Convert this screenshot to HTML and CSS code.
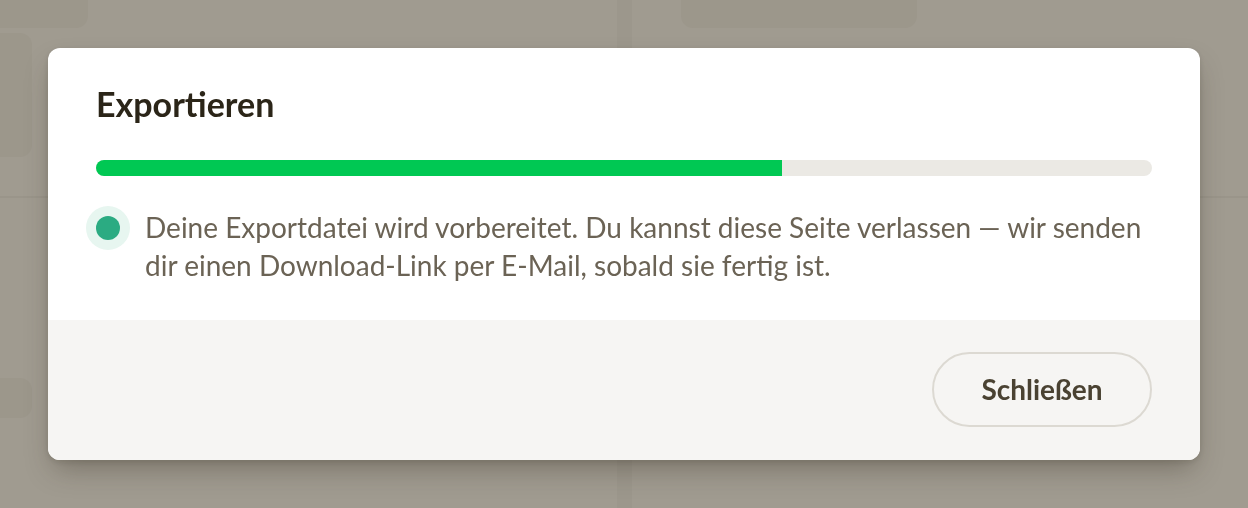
FILE: index.html
```html
<!DOCTYPE html>
<html lang="de">
<head>
    <meta charset="UTF-8">
    <meta name="viewport" content="width=device-width, initial-scale=1.0">
    <title>Exportieren</title>
    <link rel="stylesheet" href="styles.css">
</head>
<body>
    <!-- dimmed page behind the dialog -->
    <div class="page">
        <div class="pane pane-left">
            <div class="block block-top"></div>
            <div class="block block-side"></div>
            <div class="rule"></div>
            <div class="block block-side block-low"></div>
        </div>
        <div class="divider"></div>
        <div class="pane pane-right">
            <div class="block block-card"></div>
            <div class="rule rule-right"></div>
        </div>
    </div>

    <div class="overlay">
        <div class="modal">
            <div class="modal-body">
                <h2 class="modal-title">Exportieren</h2>
                <div class="progress">
                    <div class="progress-fill" style="width: 65%"></div>
                </div>
                <div class="notice">
                    <span class="notice-dot"></span>
                    <p class="notice-text">Deine Exportdatei wird vorbereitet. Du kannst diese Seite verlassen — wir senden dir einen Download-Link per E-Mail, sobald sie fertig ist.</p>
                </div>
            </div>
            <div class="modal-footer">
                <button class="btn" type="button">Schließen</button>
            </div>
        </div>
    </div>
</body>
</html>
```

FILE: styles.css
```css
html, body {
    margin: 0;
    height: 100%;
}

body {
    font-family: Lato, "Open Sans", sans-serif;
    background: #9c978c;
    overflow: hidden;
}

/* Page behind the overlay (already dimmed) */
.page {
    display: flex;
    height: 100%;
}

.pane {
    display: flex;
    flex-direction: column;
    background: #a09b90;
}

.pane-left {
    width: 617px;
}

.pane-right {
    flex: 1;
}

.divider {
    width: 15px;
    background: #9c978c;
}

.block {
    background: #9c978b;
    border-radius: 0 0 12px 0;
}

.block-top {
    width: 88px;
    height: 28px;
}

.block-side {
    width: 32px;
    height: 124px;
    margin-top: 5px;
    border-radius: 0 12px 12px 0;
}

.block-low {
    height: 40px;
    margin-top: 180px;
}

.block-card {
    width: 236px;
    height: 28px;
    margin-left: 49px;
    border-radius: 0 0 12px 12px;
}

.rule {
    height: 2px;
    margin-top: 39px;
    background: #9a958a;
}

.rule-right {
    margin-top: 168px;
}

/* Dialog */
.overlay {
    position: fixed;
    inset: 0;
    padding: 48px;
}

.modal {
    width: 1152px;
    margin: 0 auto;
    background: #fff;
    border-radius: 12px;
    overflow: hidden;
    box-shadow: 0 14px 28px -6px rgba(45, 38, 25, 0.35), 0 2px 6px rgba(45, 38, 25, 0.12);
}

.modal-body {
    padding: 36px 48px 36px;
}

.modal-title {
    margin: 0;
    font-size: 34px;
    font-weight: 700;
    line-height: 1.2;
    color: #2b2518;
}

.progress {
    height: 16px;
    margin-top: 35px;
    border-radius: 8px;
    background: #ebe9e4;
    overflow: hidden;
}

.progress-fill {
    height: 100%;
    background: #00c853;
}

.notice {
    display: flex;
    align-items: flex-start;
    gap: 25px;
    margin-top: 32px;
}

.notice-dot {
    flex: none;
    width: 24px;
    height: 24px;
    margin-top: 8px;
    border-radius: 50%;
    background: #2bab82;
    box-shadow: 0 0 0 10px #e7f6f0;
}

.notice-text {
    margin: 0;
    font-size: 28px;
    line-height: 38px;
    color: #6b6355;
}

.modal-footer {
    display: flex;
    justify-content: flex-end;
    padding: 32px 48px 33px;
    background: #f6f5f3;
}

.btn {
    width: 220px;
    height: 75px;
    border: 2px solid #dcd9d2;
    border-radius: 38px;
    background: transparent;
    font-family: inherit;
    font-size: 28px;
    font-weight: 700;
    color: #4a4232;
    cursor: pointer;
}
```
